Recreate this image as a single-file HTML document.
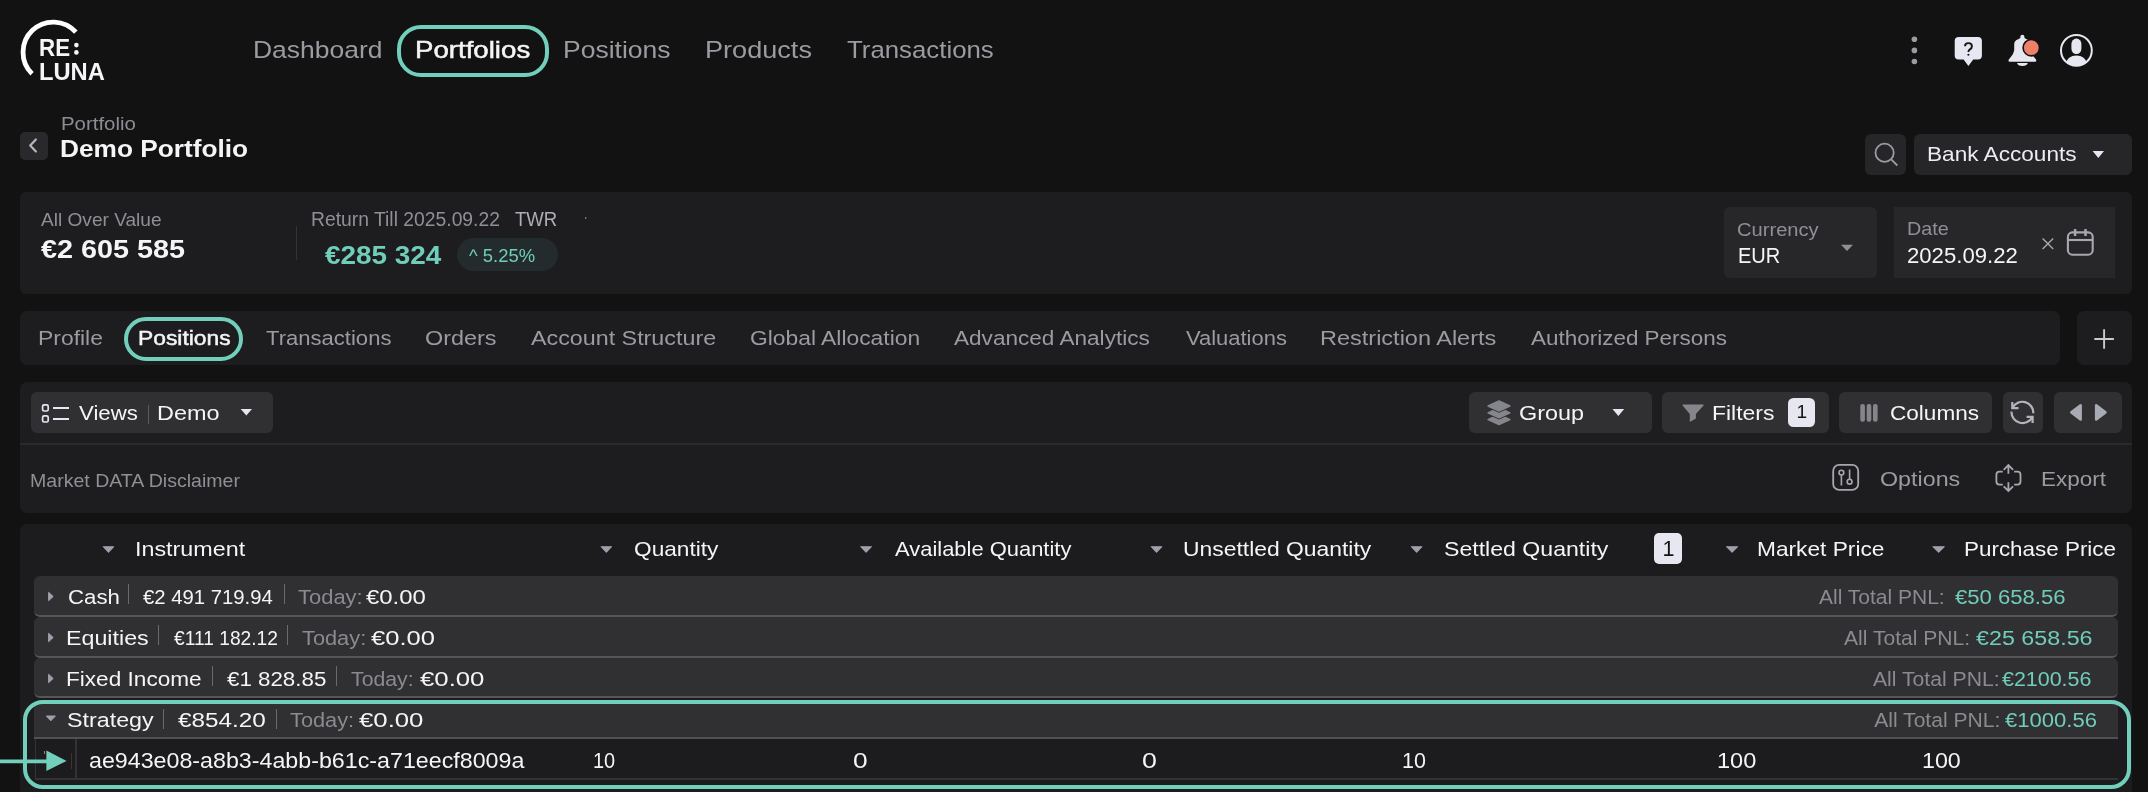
<!DOCTYPE html>
<html><head><meta charset="utf-8"><style>
html,body{margin:0;padding:0;}
body{width:2148px;height:792px;background:#121213;position:relative;overflow:hidden;font-family:"Liberation Sans",sans-serif;}
.b{position:absolute;}
.t{position:absolute;line-height:0;white-space:nowrap;font-family:"Liberation Sans",sans-serif;}
svg{position:absolute;left:0;top:0;}
.tl{position:absolute;left:0;top:0;width:2148px;height:792px;will-change:transform;}
</style></head><body>
<div class="b" style="left:20px;top:192px;width:2112px;height:102px;background:#1d1d20;border-radius:6px;"></div>
<div class="b" style="left:20px;top:311px;width:2040px;height:54px;background:#1d1d20;border-radius:7px;"></div>
<div class="b" style="left:2077px;top:311px;width:55px;height:54px;background:#1d1d20;border-radius:7px;"></div>
<div class="b" style="left:20px;top:382px;width:2112px;height:131px;background:#1d1d20;border-radius:7px;"></div>
<div class="b" style="left:20px;top:524px;width:2112px;height:300px;background:#1c1c1f;border-radius:7px;"></div>
<div class="b" style="left:397px;top:25px;width:152px;height:52px;border-radius:24px;border:4px solid #72cfbc;box-sizing:border-box;"></div>
<div class="b" style="left:20px;top:132px;width:28px;height:28px;background:#29292c;border-radius:5px;"></div>
<div class="b" style="left:1865px;top:134px;width:41px;height:41px;background:#262629;border-radius:6px;"></div>
<div class="b" style="left:1914px;top:134px;width:218px;height:41px;background:#262629;border-radius:6px;"></div>
<div class="b" style="left:296px;top:226px;width:1px;height:34px;background:#333336;"></div>
<div class="b" style="left:457px;top:238px;width:101px;height:33px;background:#232b2c;border-radius:16.5px;"></div>
<div class="b" style="left:1724px;top:207px;width:153px;height:71px;background:#27272a;border-radius:6px;"></div>
<div class="b" style="left:1894px;top:207px;width:221px;height:71px;background:#27272a;"></div>
<div class="b" style="left:124px;top:317px;width:119px;height:44px;border-radius:22px;border:4px solid #72cfbc;box-sizing:border-box;"></div>
<div class="b" style="left:20px;top:443px;width:2112px;height:2px;background:#2a2a2d;"></div>
<div class="b" style="left:31px;top:392px;width:242px;height:41px;background:#303033;border-radius:6px;"></div>
<div class="b" style="left:1469px;top:392px;width:183px;height:41px;background:#303033;border-radius:6px;"></div>
<div class="b" style="left:1662px;top:392px;width:167px;height:41px;background:#303033;border-radius:6px;"></div>
<div class="b" style="left:1839px;top:392px;width:153px;height:41px;background:#303033;border-radius:6px;"></div>
<div class="b" style="left:2003px;top:392px;width:40px;height:41px;background:#303033;border-radius:6px;"></div>
<div class="b" style="left:2054px;top:392px;width:68px;height:41px;background:#303033;border-radius:6px;"></div>
<div class="b" style="left:148px;top:405px;width:1px;height:19px;background:#5a5a5e;"></div>
<div class="b" style="left:1788px;top:398px;width:27px;height:29px;background:#e6e7f1;border-radius:5.5px;"></div>
<div class="b" style="left:1654px;top:533px;width:28px;height:31px;background:#e6e7f1;border-radius:5px;"></div>
<div class="b" style="left:34px;top:576px;width:2084px;height:41px;background:#303033;border-radius:6px;box-sizing:border-box;border-bottom:2px solid #55555a;"></div>
<div class="b" style="left:34px;top:617px;width:2084px;height:41px;background:#303033;border-radius:6px;box-sizing:border-box;border-bottom:2px solid #55555a;"></div>
<div class="b" style="left:34px;top:658px;width:2084px;height:40px;background:#303033;border-radius:6px;box-sizing:border-box;border-bottom:2px solid #55555a;"></div>
<div class="b" style="left:34px;top:704px;width:2084px;height:35px;background:#303033;box-sizing:border-box;border-bottom:2px solid #505054;"></div>
<div class="b" style="left:34.5px;top:739px;width:2083.5px;height:41px;background:#1c1c1f;box-sizing:border-box;border-left:1.5px solid #333336;border-bottom:2px solid #333336;"></div>
<div class="b" style="left:75.3px;top:739px;width:1.5px;height:40px;background:#333336;"></div>
<div class="b" style="left:44px;top:751px;width:1px;height:3px;background:#c8704f;"></div>
<div class="b" style="left:71px;top:753px;width:1px;height:16px;background:#4a3029;"></div>
<div class="b" style="left:128px;top:584px;width:1px;height:20px;background:#6a6a6e;"></div>
<div class="b" style="left:284px;top:584px;width:1px;height:20px;background:#6a6a6e;"></div>
<div class="b" style="left:158px;top:625px;width:1px;height:20px;background:#6a6a6e;"></div>
<div class="b" style="left:287px;top:625px;width:1px;height:20px;background:#6a6a6e;"></div>
<div class="b" style="left:212px;top:666px;width:1px;height:20px;background:#6a6a6e;"></div>
<div class="b" style="left:336px;top:666px;width:1px;height:20px;background:#6a6a6e;"></div>
<div class="b" style="left:163px;top:709px;width:1px;height:20px;background:#6a6a6e;"></div>
<div class="b" style="left:276px;top:709px;width:1px;height:20px;background:#6a6a6e;"></div>
<div class="b" style="left:23px;top:700px;width:2108px;height:89px;border-radius:20px;border:4px solid #72cfbc;box-sizing:border-box;"></div>
<svg width="2148" height="792" viewBox="0 0 2148 792">
<path d="M75.84 32.2 A30.2 30.2 0 1 0 32.05 73.75" fill="none" stroke="#fff" stroke-width="4.8"/>
<circle cx="76.4" cy="45.1" r="2.3" fill="#f5f5f7"/><circle cx="76.4" cy="52.4" r="2.3" fill="#f5f5f7"/>
<circle cx="1914.4" cy="39.3" r="2.8" fill="#9b9ca2"/>
<circle cx="1914.4" cy="50.4" r="2.8" fill="#9b9ca2"/>
<circle cx="1914.4" cy="61.5" r="2.8" fill="#9b9ca2"/>
<path d="M1958.7 36.9 H1977.9 Q1981.9 36.9 1981.9 40.9 V55.6 Q1981.9 59.6 1977.9 59.6 H1973.2 L1968.4 66.1 L1963.6 59.6 H1958.7 Q1954.7 59.6 1954.7 55.6 V40.9 Q1954.7 36.9 1958.7 36.9 Z" fill="#e6e7f1"/>
<path d="M1965 46.2 Q1965 43.1 1968.4 43.1 Q1971.9 43.1 1971.9 46.2 Q1971.9 48.3 1969.9 49.4 Q1968.4 50.3 1968.4 52.1" fill="none" stroke="#151515" stroke-width="1.9"/><circle cx="1968.4" cy="54.8" r="1.05" fill="#151515"/>
<path d="M2020.3 38 Q2020.3 34.8 2022.4 34.8 Q2024.5 34.8 2024.5 38 L2026.6 39.3 Q2030.6 40.6 2030.6 44.2 V50.3 Q2031 53.5 2034 57 L2036 59.6 Q2037 61.8 2035 61.8 H2009.8 Q2007.8 61.8 2008.8 59.6 L2010.8 57 Q2013.8 53.5 2014.2 50.3 V44.2 Q2014.2 40.6 2018.2 39.3 Z" fill="#e6e7f1"/>
<path d="M2017 63 H2027.8 Q2027 65.9 2022.4 65.9 Q2017.8 65.9 2017 63 Z" fill="#e6e7f1"/>
<circle cx="2031.3" cy="47.7" r="8.2" fill="#ec8168" stroke="#121213" stroke-width="1.6"/>
<circle cx="2076.4" cy="50.4" r="15.4" fill="none" stroke="#e6e7f1" stroke-width="2"/>
<rect x="2071.4" y="38.6" width="10" height="15.4" rx="4.8" ry="5.5" fill="#e6e7f1"/>
<clipPath id="av"><circle cx="2076.4" cy="50.4" r="15.2"/></clipPath><ellipse cx="2076.4" cy="63.5" rx="10.2" ry="8" fill="#e6e7f1" clip-path="url(#av)"/>
<path d="M35.9 139.5 L30.2 145.5 L35.9 151.5" fill="none" stroke="#b3b5bf" stroke-width="2.2" stroke-linecap="round" stroke-linejoin="round"/>
<circle cx="1884.6" cy="152.8" r="9.1" fill="none" stroke="#9b9ca2" stroke-width="1.8"/><path d="M1891.2 159.4 L1897.3 165.5" stroke="#9b9ca2" stroke-width="1.8"/>
<path d="M2092.6 151.1 H2104 L2098.3 157.9 Z" fill="#e6e7f1"/>
<circle cx="585.7" cy="218" r="0.8" fill="#aaa"/>
<path d="M1841 244.8 H1853 L1847 251.1 Z" fill="#8f9095"/>
<path d="M2042.6 238.6 L2053.2 249 M2053.2 238.6 L2042.6 249" stroke="#a7a8af" stroke-width="1.4"/>
<rect x="2067.9" y="232.4" width="24.8" height="22.3" rx="4.5" fill="none" stroke="#a7a8af" stroke-width="2.1"/><path d="M2067.9 240 H2092.7" stroke="#a7a8af" stroke-width="2.1"/><path d="M2075.1 229.1 V236.1 M2085.5 229.1 V236.1" stroke="#a7a8af" stroke-width="2.5"/>
<path d="M2094.3 339 H2113.9 M2104.1 329.2 V348.8" stroke="#c9cace" stroke-width="1.9"/>
<rect x="42.6" y="404.8" width="5.6" height="6.2" rx="1.6" fill="none" stroke="#e6e7f1" stroke-width="1.7"/><rect x="42.6" y="415.8" width="5.6" height="6.2" rx="1.6" fill="none" stroke="#e6e7f1" stroke-width="1.7"/><path d="M53 408 H69 M53 419 H69" stroke="#e6e7f1" stroke-width="1.9"/>
<path d="M240.7 408.9 H252 L246.35 415.6 Z" fill="#e6e7f1"/>
<path d="M1499 414.5 L1510 419.6 L1499 424.70000000000005 L1488 419.6 Z" fill="#303033" stroke="#303033" stroke-width="3.2" stroke-linejoin="round"/>
<path d="M1499 414.5 L1510 419.6 L1499 424.70000000000005 L1488 419.6 Z" fill="#85868b" stroke="#85868b" stroke-width="1.4" stroke-linejoin="round"/>
<path d="M1499 407.7 L1510 412.8 L1499 417.90000000000003 L1488 412.8 Z" fill="#303033" stroke="#303033" stroke-width="3.2" stroke-linejoin="round"/>
<path d="M1499 407.7 L1510 412.8 L1499 417.90000000000003 L1488 412.8 Z" fill="#85868b" stroke="#85868b" stroke-width="1.4" stroke-linejoin="round"/>
<path d="M1499 400.9 L1510 406.0 L1499 411.1 L1488 406.0 Z" fill="#303033" stroke="#303033" stroke-width="3.2" stroke-linejoin="round"/>
<path d="M1499 400.9 L1510 406.0 L1499 411.1 L1488 406.0 Z" fill="#85868b" stroke="#85868b" stroke-width="1.4" stroke-linejoin="round"/>
<path d="M1612.5 408.9 H1624.2 L1618.35 416 Z" fill="#e6e7f1"/>
<path d="M1683.2 404.4 H1702.9 Q1704.3 404.5 1703.5 405.6 L1695.9 413.9 V418.6 L1690.8 421.5 Q1689.8 422 1689.8 420.9 V413.9 L1682.6 405.6 Q1681.8 404.5 1683.2 404.4 Z" fill="#85868b"/>
<rect x="1860.3" y="404.1" width="4.6" height="17.6" rx="2" fill="#85868b"/>
<rect x="1866.7" y="404.1" width="4.6" height="17.6" rx="2" fill="#85868b"/>
<rect x="1873.0" y="404.1" width="4.6" height="17.6" rx="2" fill="#85868b"/>
<path d="M2012.6 407.6 A11 11 0 0 1 2033.3 413.2 M2011.5 411.6 A11 11 0 0 0 2032.4 416.9" fill="none" stroke="#b4b5bc" stroke-width="2.2"/>
<path d="M2012.3 401.9 V408.1 H2018.5 M2026.6 416.8 H2032.6 V422.9" fill="none" stroke="#b4b5bc" stroke-width="2.2"/>
<path d="M2080.6 405.3 V419.5 L2071.4 412.4 Z M2096.2 405.3 V419.5 L2105.4 412.4 Z" fill="#a9abb4" stroke="#a9abb4" stroke-width="2.6" stroke-linejoin="round"/>
<rect x="1833.2" y="464.9" width="25" height="25" rx="6" fill="none" stroke="#a7a8af" stroke-width="1.8"/>
<circle cx="1841.4" cy="472.6" r="2.4" fill="none" stroke="#a7a8af" stroke-width="1.6"/><path d="M1841.4 475 V485.5 M1849.6 469.4 V479.3" stroke="#a7a8af" stroke-width="1.6"/><circle cx="1849.6" cy="481.7" r="2.4" fill="none" stroke="#a7a8af" stroke-width="1.6"/>
<path d="M2002.8 471.7 H1999.4 Q1996.4 471.7 1996.4 474.7 V481.6 Q1996.4 484.6 1999.4 484.6 H2002.8 M2014.1 471.7 H2017.5 Q2020.5 471.7 2020.5 474.7 V481.6 Q2020.5 484.6 2017.5 484.6 H2014.1" fill="none" stroke="#a7a8af" stroke-width="1.8"/>
<path d="M2008.4 465.2 V473.8 M2003.7 469.8 L2008.4 465.1 L2013.1 469.8 M2008.4 482.3 V490.9 M2003.7 486.3 L2008.4 491 L2013.1 486.3" fill="none" stroke="#a7a8af" stroke-width="1.8"/>
<path d="M103.30 546.7 H113.70 L108.50 552.2 Z" fill="#9ea0aa" stroke="#9ea0aa" stroke-width="1.1" stroke-linejoin="round"/>
<path d="M601.20 546.7 H611.50 L606.35 552.2 Z" fill="#9ea0aa" stroke="#9ea0aa" stroke-width="1.1" stroke-linejoin="round"/>
<path d="M860.80 546.7 H871.40 L866.10 552.2 Z" fill="#9ea0aa" stroke="#9ea0aa" stroke-width="1.1" stroke-linejoin="round"/>
<path d="M1151.30 546.7 H1161.80 L1156.55 552.2 Z" fill="#9ea0aa" stroke="#9ea0aa" stroke-width="1.1" stroke-linejoin="round"/>
<path d="M1411.40 546.7 H1421.90 L1416.65 552.2 Z" fill="#9ea0aa" stroke="#9ea0aa" stroke-width="1.1" stroke-linejoin="round"/>
<path d="M1726.60 546.7 H1737.60 L1732.10 552.2 Z" fill="#9ea0aa" stroke="#9ea0aa" stroke-width="1.1" stroke-linejoin="round"/>
<path d="M1933.00 546.7 H1944.30 L1938.65 552.2 Z" fill="#9ea0aa" stroke="#9ea0aa" stroke-width="1.1" stroke-linejoin="round"/>
<path d="M48.6 592.3 V600.7 L53.2 596.5 Z" fill="#9ea0aa" stroke="#9ea0aa" stroke-width="1" stroke-linejoin="round"/>
<path d="M48.6 633.3 V641.7 L53.2 637.5 Z" fill="#9ea0aa" stroke="#9ea0aa" stroke-width="1" stroke-linejoin="round"/>
<path d="M48.6 674.3 V682.7 L53.2 678.5 Z" fill="#9ea0aa" stroke="#9ea0aa" stroke-width="1" stroke-linejoin="round"/>
<path d="M46.3 716 H55.4 L50.85 720.8 Z" fill="#9ea0aa" stroke="#9ea0aa" stroke-width="1" stroke-linejoin="round"/>
<path d="M0 761.3 H50" stroke="#72cfbc" stroke-width="3.8"/><path d="M46.4 750.6 V771 L66.6 760.9 Z" fill="#72cfbc"/>
</svg>
<div class="tl">
<div class="t" style="left:38.93px;top:48px;font-size:24.27px;color:#f5f5f7;font-weight:700;transform:scaleX(0.9203);transform-origin:0 0;">RE</div>
<div class="t" style="left:38.83px;top:72px;font-size:24.27px;color:#f5f5f7;font-weight:700;transform:scaleX(0.9774);transform-origin:0 0;">LUNA</div>
<div class="t" style="left:252.84px;top:50px;font-size:23.86px;color:#9b9ca2;transform:scaleX(1.1097);transform-origin:0 0;">Dashboard</div>
<div class="t" style="left:414.76px;top:50px;font-size:23.86px;color:#f5f5f7;-webkit-text-stroke:0.5px #f5f5f7;transform:scaleX(1.1583);transform-origin:0 0;">Portfolios</div>
<div class="t" style="left:562.78px;top:50px;font-size:23.86px;color:#9b9ca2;transform:scaleX(1.1118);transform-origin:0 0;">Positions</div>
<div class="t" style="left:705.02px;top:50px;font-size:23.86px;color:#9b9ca2;transform:scaleX(1.1359);transform-origin:0 0;">Products</div>
<div class="t" style="left:846.57px;top:50px;font-size:23.86px;color:#9b9ca2;transform:scaleX(1.0815);transform-origin:0 0;">Transactions</div>
<div class="t" style="left:60.92px;top:124px;font-size:18.90px;color:#8c8d92;transform:scaleX(1.0809);transform-origin:0 0;">Portfolio</div>
<div class="t" style="left:60.08px;top:149px;font-size:24.70px;color:#f5f5f7;font-weight:700;transform:scaleX(1.0633);transform-origin:0 0;">Demo Portfolio</div>
<div class="t" style="left:1926.87px;top:154px;font-size:20.08px;color:#ececf2;transform:scaleX(1.1260);transform-origin:0 0;">Bank Accounts</div>
<div class="t" style="left:41.00px;top:220px;font-size:17.59px;color:#8f9095;transform:scaleX(1.0856);transform-origin:0 0;">All Over Value</div>
<div class="t" style="left:41.00px;top:249px;font-size:25.00px;color:#f5f5f7;font-weight:700;transform:scaleX(1.1520);transform-origin:0 0;">€2 605 585</div>
<div class="t" style="left:310.61px;top:219px;font-size:19.48px;color:#8f9095;transform:scaleX(0.9920);transform-origin:0 0;">Return Till 2025.09.22</div>
<div class="t" style="left:515.00px;top:219px;font-size:19.48px;color:#aeafb4;transform:scaleX(0.9535);transform-origin:0 0;">TWR</div>
<div class="t" style="left:324.82px;top:255px;font-size:26.31px;color:#70cdb9;font-weight:700;transform:scaleX(1.0591);transform-origin:0 0;">€285 324</div>
<div class="t" style="left:468.80px;top:256px;font-size:18.31px;color:#70cdb9;transform:scaleX(1.0078);transform-origin:0 0;">^ 5.25%</div>
<div class="t" style="left:1736.57px;top:230px;font-size:18.90px;color:#8f9095;transform:scaleX(1.0659);transform-origin:0 0;">Currency</div>
<div class="t" style="left:1737.51px;top:256px;font-size:21.80px;color:#f5f5f7;transform:scaleX(0.9195);transform-origin:0 0;">EUR</div>
<div class="t" style="left:1907.13px;top:229px;font-size:18.31px;color:#8f9095;transform:scaleX(1.0814);transform-origin:0 0;">Date</div>
<div class="t" style="left:1906.81px;top:256px;font-size:22.24px;color:#f5f5f7;transform:scaleX(0.9954);transform-origin:0 0;">2025.09.22</div>
<div class="t" style="left:38.25px;top:338px;font-size:21.08px;color:#9b9ca2;transform:scaleX(1.0866);transform-origin:0 0;">Profile</div>
<div class="t" style="left:137.87px;top:338px;font-size:21.08px;color:#f5f5f7;-webkit-text-stroke:0.5px #f5f5f7;transform:scaleX(1.0834);transform-origin:0 0;">Positions</div>
<div class="t" style="left:265.97px;top:338px;font-size:21.08px;color:#9b9ca2;transform:scaleX(1.0463);transform-origin:0 0;">Transactions</div>
<div class="t" style="left:424.89px;top:338px;font-size:21.08px;color:#9b9ca2;transform:scaleX(1.1111);transform-origin:0 0;">Orders</div>
<div class="t" style="left:530.61px;top:338px;font-size:21.08px;color:#9b9ca2;transform:scaleX(1.1048);transform-origin:0 0;">Account Structure</div>
<div class="t" style="left:749.56px;top:338px;font-size:21.08px;color:#9b9ca2;transform:scaleX(1.0834);transform-origin:0 0;">Global Allocation</div>
<div class="t" style="left:953.82px;top:338px;font-size:21.08px;color:#9b9ca2;transform:scaleX(1.0711);transform-origin:0 0;">Advanced Analytics</div>
<div class="t" style="left:1185.62px;top:338px;font-size:21.08px;color:#9b9ca2;transform:scaleX(1.0413);transform-origin:0 0;">Valuations</div>
<div class="t" style="left:1320.26px;top:338px;font-size:21.08px;color:#9b9ca2;transform:scaleX(1.1147);transform-origin:0 0;">Restriction Alerts</div>
<div class="t" style="left:1530.79px;top:338px;font-size:21.08px;color:#9b9ca2;transform:scaleX(1.0656);transform-origin:0 0;">Authorized Persons</div>
<div class="t" style="left:79.15px;top:413px;font-size:20.08px;color:#f5f5f7;transform:scaleX(1.1061);transform-origin:0 0;">Views</div>
<div class="t" style="left:156.51px;top:413px;font-size:20.08px;color:#f5f5f7;transform:scaleX(1.1668);transform-origin:0 0;">Demo</div>
<div class="t" style="left:1519.48px;top:413px;font-size:20.63px;color:#f5f5f7;transform:scaleX(1.1341);transform-origin:0 0;">Group</div>
<div class="t" style="left:1711.83px;top:413px;font-size:20.63px;color:#f5f5f7;transform:scaleX(1.1113);transform-origin:0 0;">Filters</div>
<div class="t" style="left:1889.73px;top:413px;font-size:20.63px;color:#f5f5f7;transform:scaleX(1.0938);transform-origin:0 0;">Columns</div>
<div class="t" style="left:30.35px;top:481px;font-size:19.04px;color:#8f9095;transform:scaleX(1.0271);transform-origin:0 0;">Market DATA Disclaimer</div>
<div class="t" style="left:1879.72px;top:479px;font-size:20.93px;color:#9b9ca2;transform:scaleX(1.1127);transform-origin:0 0;">Options</div>
<div class="t" style="left:2040.92px;top:479px;font-size:20.93px;color:#9b9ca2;transform:scaleX(1.0753);transform-origin:0 0;">Export</div>
<div class="t" style="left:134.58px;top:549px;font-size:20.64px;color:#f5f5f7;transform:scaleX(1.1303);transform-origin:0 0;">Instrument</div>
<div class="t" style="left:633.95px;top:549px;font-size:20.64px;color:#f5f5f7;transform:scaleX(1.0987);transform-origin:0 0;">Quantity</div>
<div class="t" style="left:895.18px;top:549px;font-size:20.64px;color:#f5f5f7;transform:scaleX(1.0633);transform-origin:0 0;">Available Quantity</div>
<div class="t" style="left:1182.50px;top:549px;font-size:20.64px;color:#f5f5f7;transform:scaleX(1.1095);transform-origin:0 0;">Unsettled Quantity</div>
<div class="t" style="left:1443.94px;top:549px;font-size:20.64px;color:#f5f5f7;transform:scaleX(1.1199);transform-origin:0 0;">Settled Quantity</div>
<div class="t" style="left:1756.90px;top:549px;font-size:20.64px;color:#f5f5f7;transform:scaleX(1.1010);transform-origin:0 0;">Market Price</div>
<div class="t" style="left:1963.65px;top:549px;font-size:20.64px;color:#f5f5f7;transform:scaleX(1.0870);transform-origin:0 0;">Purchase Price</div>
<div class="t" style="left:67.55px;top:597px;font-size:21.08px;color:#f5f5f7;transform:scaleX(1.0532);transform-origin:0 0;">Cash</div>
<div class="t" style="left:143.00px;top:597px;font-size:21.08px;color:#f5f5f7;transform:scaleX(0.9627);transform-origin:0 0;">€2 491 719.94</div>
<div class="t" style="left:297.60px;top:597px;font-size:21.08px;color:#8a8b90;transform:scaleX(1.0412);transform-origin:0 0;">Today:</div>
<div class="t" style="left:365.84px;top:597px;font-size:21.08px;color:#f5f5f7;transform:scaleX(1.1347);transform-origin:0 0;">€0.00</div>
<div class="t" style="left:1819.00px;top:597px;font-size:21.08px;color:#8a8b90;transform:scaleX(0.9960);transform-origin:0 0;">All Total PNL:</div>
<div class="t" style="left:1955.00px;top:597px;font-size:21.08px;color:#70cdb9;transform:scaleX(1.0477);transform-origin:0 0;">€50 658.56</div>
<div class="t" style="left:66.06px;top:638px;font-size:21.08px;color:#f5f5f7;transform:scaleX(1.1028);transform-origin:0 0;">Equities</div>
<div class="t" style="left:173.82px;top:638px;font-size:21.08px;color:#f5f5f7;transform:scaleX(0.9115);transform-origin:0 0;">€111 182.12</div>
<div class="t" style="left:302.37px;top:638px;font-size:21.08px;color:#8a8b90;transform:scaleX(1.0335);transform-origin:0 0;">Today:</div>
<div class="t" style="left:371.13px;top:638px;font-size:21.08px;color:#f5f5f7;transform:scaleX(1.2117);transform-origin:0 0;">€0.00</div>
<div class="t" style="left:1844.00px;top:638px;font-size:21.08px;color:#8a8b90;">All Total PNL:</div>
<div class="t" style="left:1976.00px;top:638px;font-size:21.08px;color:#70cdb9;transform:scaleX(1.1048);transform-origin:0 0;">€25 658.56</div>
<div class="t" style="left:66.10px;top:679px;font-size:21.08px;color:#f5f5f7;transform:scaleX(1.0721);transform-origin:0 0;">Fixed Income</div>
<div class="t" style="left:226.79px;top:679px;font-size:21.08px;color:#f5f5f7;transform:scaleX(1.0592);transform-origin:0 0;">€1 828.85</div>
<div class="t" style="left:350.81px;top:679px;font-size:21.08px;color:#8a8b90;transform:scaleX(1.0083);transform-origin:0 0;">Today:</div>
<div class="t" style="left:420.00px;top:679px;font-size:21.08px;color:#f5f5f7;transform:scaleX(1.2212);transform-origin:0 0;">€0.00</div>
<div class="t" style="left:1872.80px;top:679px;font-size:21.08px;color:#8a8b90;transform:scaleX(1.0041);transform-origin:0 0;">All Total PNL:</div>
<div class="t" style="left:2001.80px;top:679px;font-size:21.08px;color:#70cdb9;transform:scaleX(1.0172);transform-origin:0 0;">€2100.56</div>
<div class="t" style="left:67.06px;top:720px;font-size:21.08px;color:#f5f5f7;transform:scaleX(1.1040);transform-origin:0 0;">Strategy</div>
<div class="t" style="left:178.00px;top:720px;font-size:21.08px;color:#f5f5f7;transform:scaleX(1.1514);transform-origin:0 0;">€854.20</div>
<div class="t" style="left:290.21px;top:720px;font-size:21.08px;color:#8a8b90;transform:scaleX(1.0329);transform-origin:0 0;">Today:</div>
<div class="t" style="left:359.00px;top:720px;font-size:21.08px;color:#f5f5f7;transform:scaleX(1.2213);transform-origin:0 0;">€0.00</div>
<div class="t" style="left:1874.20px;top:720px;font-size:21.08px;color:#8a8b90;">All Total PNL:</div>
<div class="t" style="left:2005.37px;top:720px;font-size:21.08px;color:#70cdb9;transform:scaleX(1.0460);transform-origin:0 0;">€1000.56</div>
<div class="t" style="left:88.91px;top:761px;font-size:21.37px;color:#f5f5f7;transform:scaleX(1.0877);transform-origin:0 0;">ae943e08-a8b3-4abb-b61c-a71eecf8009a</div>
<div class="t" style="left:592.68px;top:761px;font-size:21.37px;color:#f5f5f7;transform:scaleX(0.9331);transform-origin:0 0;">10</div>
<div class="t" style="left:853.10px;top:761px;font-size:21.37px;color:#f5f5f7;transform:scaleX(1.2300);transform-origin:0 0;">0</div>
<div class="t" style="left:1141.75px;top:761px;font-size:21.37px;color:#f5f5f7;transform:scaleX(1.2532);transform-origin:0 0;">0</div>
<div class="t" style="left:1402.11px;top:761px;font-size:21.37px;color:#f5f5f7;transform:scaleX(1.0052);transform-origin:0 0;">10</div>
<div class="t" style="left:1717.28px;top:761px;font-size:21.37px;color:#f5f5f7;transform:scaleX(1.1033);transform-origin:0 0;">100</div>
<div class="t" style="left:1922.25px;top:761px;font-size:21.37px;color:#f5f5f7;transform:scaleX(1.0887);transform-origin:0 0;">100</div>
<div class="t" style="left:1796.40px;top:412px;font-size:19.04px;color:#141414;">1</div>
<div class="t" style="left:1662.40px;top:549px;font-size:21.51px;color:#141414;">1</div>
</div>
</body></html>
